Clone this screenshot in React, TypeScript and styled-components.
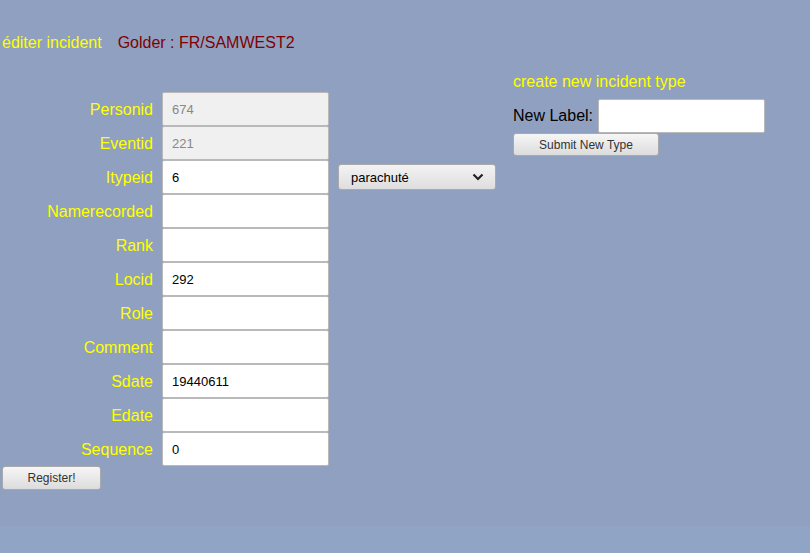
import React from "react";
import styled, { createGlobalStyle } from "styled-components";

const GlobalStyle = createGlobalStyle`
  html {
    background: #90a5c5;
  }
  body {
    margin: 0;
    font-family: "Liberation Sans", Arial, sans-serif;
  }
`;

type Field = { label: string; value: string; disabled?: boolean; withSelect?: boolean };

const fields: Field[] = [
  { label: "Personid", value: "674", disabled: true },
  { label: "Eventid", value: "221", disabled: true },
  { label: "Itypeid", value: "6", withSelect: true },
  { label: "Namerecorded", value: "" },
  { label: "Rank", value: "" },
  { label: "Locid", value: "292" },
  { label: "Role", value: "" },
  { label: "Comment", value: "" },
  { label: "Sdate", value: "19440611" },
  { label: "Edate", value: "" },
  { label: "Sequence", value: "0" },
];

const App: React.FC = () => {
  return (
    <Page>
      <GlobalStyle />
      <Header>
        <Title>éditer incident</Title>
        <Golder>Golder : FR/SAMWEST2</Golder>
      </Header>

      <Main>
        <FormColumn>
          <FormGrid>
            {fields.map((f) => (
              <React.Fragment key={f.label}>
                <Label>{f.label}</Label>
                <TextInput defaultValue={f.value} disabled={f.disabled} />
                {f.withSelect ? (
                  <SelectWrap>
                    <Select defaultValue="parachuté">
                      <option value="parachuté">parachuté</option>
                    </Select>
                    <Chevron width="12" height="8" viewBox="0 0 12 8">
                      <polyline points="1.5,1.5 6,6 10.5,1.5" fill="none" stroke="#222" strokeWidth="2.2" />
                    </Chevron>
                  </SelectWrap>
                ) : (
                  <span />
                )}
              </React.Fragment>
            ))}
          </FormGrid>
          <Button $width={99} $height={24}>Register!</Button>
        </FormColumn>

        <SidePanel>
          <Title>create new incident type</Title>
          <NewLabelRow>
            <NewLabelText>New Label:</NewLabelText>
            <TextInput />
          </NewLabelRow>
          <Button $width={146} $height={23}>Submit New Type</Button>
        </SidePanel>
      </Main>
    </Page>
  );
};

export default App;

const Page = styled.div`
  min-height: 526px;
  background: #8fa0c0;
  padding-left: 2px;
  box-sizing: border-box;
`;

const Header = styled.div`
  display: flex;
  gap: 16px;
  padding-top: 34px;
  line-height: 18px;
`;

const Title = styled.div`
  color: #ffff00;
  font-size: 16px;
  line-height: 18px;
`;

const Golder = styled.div`
  color: #800000;
  font-size: 16px;
`;

const Main = styled.div`
  display: flex;
  align-items: flex-start;
`;

const FormColumn = styled.div`
  padding-top: 40px;
  display: flex;
  flex-direction: column;
  align-items: flex-start;
`;

const FormGrid = styled.div`
  display: grid;
  grid-template-columns: 151px 167px 158px;
  grid-auto-rows: 34px;
  column-gap: 9px;
  align-items: center;
`;

const Label = styled.div`
  color: #ffff00;
  font-size: 16px;
  text-align: right;
  padding-top: 2px;
`;

const TextInput = styled.input`
  box-sizing: border-box;
  width: 167px;
  height: 34px;
  border: 1px solid #b9b9b9;
  border-radius: 2px;
  background: #fff;
  padding: 0 9px;
  font-family: "Liberation Sans", Arial, sans-serif;
  font-size: 13px;
  color: #000;
  &:disabled {
    background: #f0f0f0;
    color: #888;
  }
`;

const SelectWrap = styled.div`
  position: relative;
  width: 158px;
  height: 26px;
`;

const Select = styled.select`
  appearance: none;
  box-sizing: border-box;
  width: 158px;
  height: 26px;
  border: 1px solid #aaa;
  border-radius: 3px;
  background: linear-gradient(#f3f3f3, #dedede);
  padding: 0 0 0 12px;
  font-family: "Liberation Sans", Arial, sans-serif;
  font-size: 13px;
  color: #000;
`;

const Chevron = styled.svg`
  position: absolute;
  right: 12px;
  top: 9px;
  pointer-events: none;
`;

const Button = styled.button<{ $width: number; $height: number }>`
  box-sizing: border-box;
  width: ${(p) => p.$width}px;
  height: ${(p) => p.$height}px;
  border: 1px solid #a9a9a9;
  border-radius: 3px;
  background: linear-gradient(#f6f6f6, #dcdcdc);
  font-family: "Liberation Sans", Arial, sans-serif;
  font-size: 12px;
  color: #333;
  padding: 0;
`;

const SidePanel = styled.div`
  margin-left: 17px;
  padding-top: 21px;
  display: flex;
  flex-direction: column;
  align-items: flex-start;
`;

const NewLabelRow = styled.div`
  display: flex;
  align-items: center;
  gap: 5px;
  margin-top: 8px;
`;

const NewLabelText = styled.span`
  color: #000;
  font-size: 16px;
`;
